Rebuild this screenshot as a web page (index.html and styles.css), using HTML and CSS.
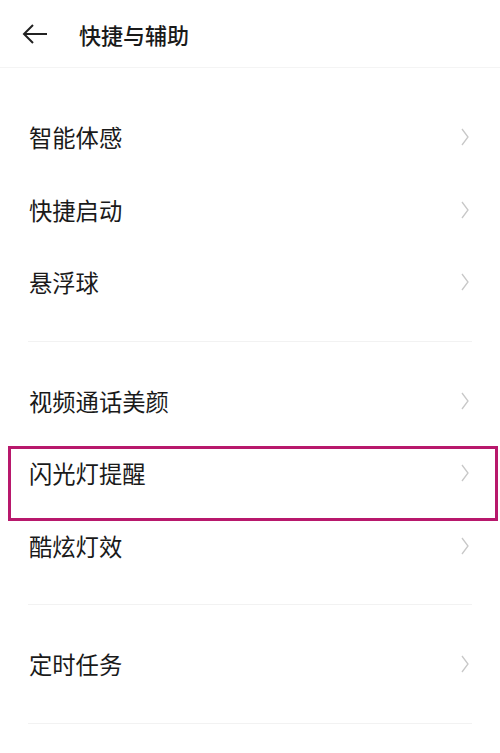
FILE: index.html
```html
<!DOCTYPE html>
<html lang="zh-CN">
<head>
    <meta charset="UTF-8">
    <meta name="viewport" content="width=device-width, initial-scale=1.0">
    <title>快捷与辅助</title>
    <link rel="stylesheet" href="styles.css">
</head>
<body>
    <div class="header">
        <svg class="back" width="26" height="20" viewBox="0 0 26 20">
            <path d="M25 10 H2 M11 1 L2 10 L11 19" fill="none" stroke="#222" stroke-width="2"/>
        </svg>
        <div class="title">快捷与辅助</div>
    </div>

    <div class="list">
        <div class="group">
            <div class="item"><span>智能体感</span><svg class="arrow" viewBox="0 0 8 18"><path d="M1 1 L7 9 L1 17"/></svg></div>
            <div class="item"><span>快捷启动</span><svg class="arrow" viewBox="0 0 8 18"><path d="M1 1 L7 9 L1 17"/></svg></div>
            <div class="item"><span>悬浮球</span><svg class="arrow" viewBox="0 0 8 18"><path d="M1 1 L7 9 L1 17"/></svg></div>
        </div>
        <div class="group">
            <div class="item"><span>视频通话美颜</span><svg class="arrow" viewBox="0 0 8 18"><path d="M1 1 L7 9 L1 17"/></svg></div>
            <div class="item"><span>闪光灯提醒</span><svg class="arrow" viewBox="0 0 8 18"><path d="M1 1 L7 9 L1 17"/></svg></div>
            <div class="item"><span>酷炫灯效</span><svg class="arrow" viewBox="0 0 8 18"><path d="M1 1 L7 9 L1 17"/></svg></div>
        </div>
        <div class="group">
            <div class="item"><span>定时任务</span><svg class="arrow" viewBox="0 0 8 18"><path d="M1 1 L7 9 L1 17"/></svg></div>
        </div>
    </div>

    <div class="mark"></div>
</body>
</html>
```

FILE: styles.css
```css
body {
    margin: 0;
    background: #fff;
    font-family: "Noto Sans CJK SC", "Noto Sans", sans-serif;
    color: #1a1a1a;
    position: relative;
    height: 753px;
    overflow: hidden;
}
.header {
    height: 67px;
    border-bottom: 1px solid #f4f4f4;
    display: flex;
    align-items: center;
    padding-left: 22px;
}
.back {
    margin-right: 31px;
    margin-top: 1px;
}
.title {
    font-size: 22px;
    font-weight: 500;
    color: #1a1a1a;
}
.list {
    padding: 33px 28px 0 28px;
}
.group {
    border-bottom: 1px solid #f2f2f2;
    padding-bottom: 22px;
    margin-bottom: 23px;
}
.item {
    height: 72.5px;
    display: flex;
    align-items: center;
    justify-content: space-between;
    font-size: 23.3px;
    padding-left: 1px;
}
.arrow {
    width: 8px;
    height: 18px;
    margin-right: 3px;
    fill: none;
    stroke: #c8c8c8;
    stroke-width: 1.3;
}
.mark {
    position: absolute;
    left: 8px;
    top: 446px;
    width: 484px;
    height: 69px;
    border: 3px solid #b8186c;
}
```
